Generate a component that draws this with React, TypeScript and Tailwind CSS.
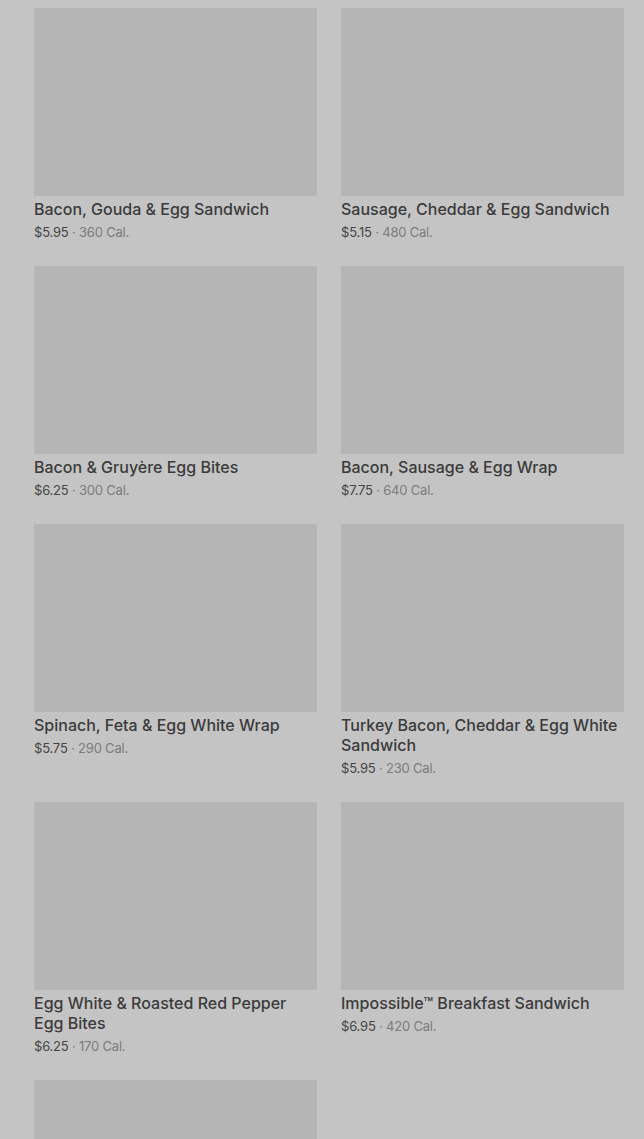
const items = [
  { name: "Bacon, Gouda & Egg Sandwich", price: "$5.95", cal: "360 Cal." },
  { name: "Sausage, Cheddar & Egg Sandwich", price: "$5.15", cal: "480 Cal." },
  { name: "Bacon & Gruyère Egg Bites", price: "$6.25", cal: "300 Cal." },
  { name: "Bacon, Sausage & Egg Wrap", price: "$7.75", cal: "640 Cal." },
  { name: "Spinach, Feta & Egg White Wrap", price: "$5.75", cal: "290 Cal." },
  { name: "Turkey Bacon, Cheddar & Egg White Sandwich", price: "$5.95", cal: "230 Cal." },
  { name: "Egg White & Roasted Red Pepper Egg Bites", price: "$6.25", cal: "170 Cal." },
  { name: "Impossible™ Breakfast Sandwich", price: "$6.95", cal: "420 Cal." },
  { name: "", price: "", cal: "" },
];

function MenuCard({ name, price, cal }: { name: string; price: string; cal: string }) {
  return (
    <div className="flex flex-col">
      <div className="h-[188px] w-full bg-[#b5b5b5]" />
      {name && (
        <>
          <h3 className="mt-[3px] text-[16px] font-medium leading-5 text-[#3b3b3b]">{name}</h3>
          <p className="mt-[5px] h-4 text-[13px] leading-4 tracking-[-0.2px]">
            <span className="text-[#454545]">{price}</span>
            <span className="text-[#7c7c7c]"> · {cal}</span>
          </p>
        </>
      )}
    </div>
  );
}

export default function App() {
  return (
    <div
      className="min-h-[1139px] h-[1139px] overflow-hidden bg-[#c4c4c4] pl-[34px] pr-[20px] pt-[8px]"
      style={{ fontFamily: "Inter, 'Noto Sans', sans-serif" }}
    >
      <div className="grid grid-cols-2 gap-x-[24px] gap-y-[26px]">
        {items.map((item, i) => (
          <MenuCard key={i} {...item} />
        ))}
      </div>
    </div>
  );
}
